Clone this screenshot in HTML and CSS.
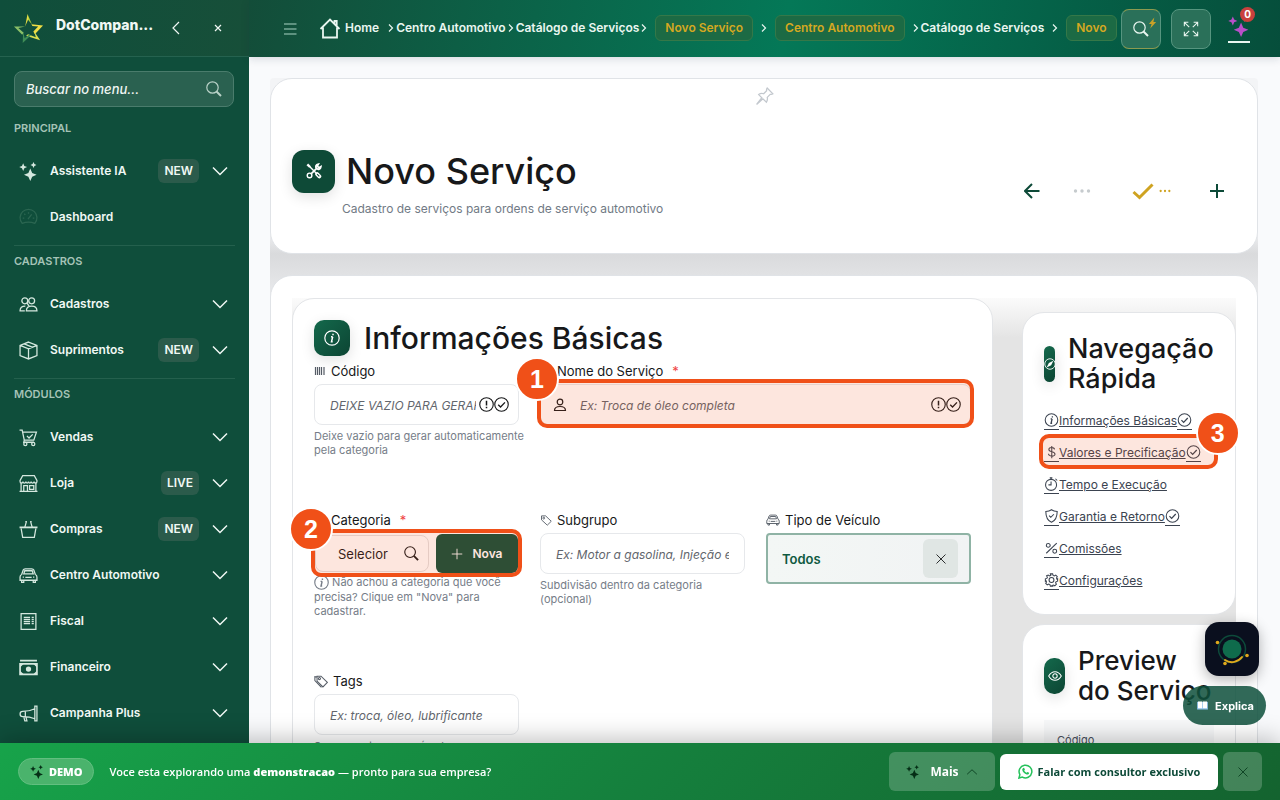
FILE: index.html
```html
<!DOCTYPE html>
<html lang="pt-BR">
<head>
<meta charset="utf-8">
<title>Novo Serviço</title>
<link rel="stylesheet" href="styles.css">
</head>
<body>
<svg class="sprite" aria-hidden="true">
  <symbol id="chev-down" viewBox="0 0 16 16"><path d="M1 4.5l7 7 7-7"/></symbol>
  <symbol id="chev-up" viewBox="0 0 16 16"><path d="M1.500 11L8 5l6.500 6"/></symbol>
  <symbol id="chev-left" viewBox="0 0 16 16"><path d="M11 2L5 8l6 6"/></symbol>
  <symbol id="chev-right" viewBox="0 0 8 12"><path d="M2 2.500L5.500 6 2 9.500"/></symbol>
  <symbol id="close" viewBox="0 0 16 16"><path d="M2 2l12 12M14 2L2 14"/></symbol>
  <symbol id="plus" viewBox="0 0 16 16"><path d="M8 1v14M1 8h14"/></symbol>
  <symbol id="search" viewBox="0 0 16 16"><circle cx="6.500" cy="6.500" r="5.700"/><path d="M10.500 10.500l4.500 4.500" stroke-width="2"/></symbol>
  <symbol id="sparkle" viewBox="0 0 16 16"><path class="solid" d="M9.500 5.500l1.600 3.700 3.700 1.600-3.700 1.600-1.600 3.600-1.600-3.600-3.700-1.600 3.700-1.600zM3.500 1l1 2.300 2.300 1-2.300 1-1 2.300-1-2.300-2.300-1 2.300-1zM12.200 0l.8 1.700 1.700.8-1.700.8-.8 1.700-.8-1.700-1.700-.8 1.700-.8z"/></symbol>
  <symbol id="gauge" viewBox="0 0 18 18"><path d="M3 14.500a8 8 0 1 1 12 0c-4-1.500-8-1.500-12 0zM8.500 10.500L12 6M9 4v1.500M3.500 9.500H5M13 9.500h1.500M5 5.500l1 1"/></symbol>
  <symbol id="people" viewBox="0 0 18 18"><circle cx="5.500" cy="5.500" r="2.800"/><circle cx="12" cy="5.500" r="2.800"/><path d="M7 15h10c0-3-2-4.500-5-4.500S7 12 7 15zM5.500 15H1c0-3 1.500-4.500 5-4.500M7.500 7.500l2 3"/></symbol>
  <symbol id="box" viewBox="0 0 18 18"><path d="M9 1l8 3.200v9.600L9 17l-8-3.200V4.200zM1 4.200l8 3.300 8-3.300M9 7.500V17M5 2.800l8 3.200"/></symbol>
  <symbol id="cart" viewBox="0 0 18 18"><path d="M.5 2H3l2 9.500h9L16.500 4H3.500M5 11.500l-.5 2h9.500M7.500 7.500l2 2 3.500-3.500"/><circle cx="6" cy="15.200" r="1.500"/><circle cx="13.500" cy="15.200" r="1.500"/></symbol>
  <symbol id="shop" viewBox="0 0 18 18"><path d="M3.500 1.500h11L17 6v1c0 2-2.500 2-2.700.2C14 9 11.500 9 11.500 7.200 11.500 9 9 9 9 7.200 9 9 6.500 9 6.500 7.200 6.500 9 4 9 3.700 7.200 3.500 9 1 9 1 7V6zM2 9v7.500M16 9v7.500M.5 16.500h17M4.500 16.500V11H8v5.500M10 11h4v3.500h-4z"/></symbol>
  <symbol id="basket" viewBox="0 0 18 18"><path stroke-width="1.700" d="M.5 7h17"/><path d="M2 8l1.500 8.500h11L16 8M5.500 7L7 1.500M12.500 7L11 1.500M6 1.500h1.500M10.500 1.500H12"/></symbol>
  <symbol id="car" viewBox="0 0 18 18"><path d="M2.500 8L4 3.800C4.300 3 5 2.800 6 2.700h6c1 0 1.700.3 2 1.100L15.500 8c1 .5 1.500 1.200 1.500 2.500v3H1v-3C1 9.200 1.500 8.500 2.500 8zM4.500 7.500l1-3h7l1 3zM2.500 13.500V15.500h2v-2M13.500 13.500v2h2v-2M6 10.800h6M3.500 10.500h1.200M13.300 10.500h1.200"/></symbol>
  <symbol id="receipt" viewBox="0 0 18 18"><path d="M2 1.500h14v15H2z"/><path d="M4.500 5h6M4.500 7h6M4.500 9h6M4.500 11h6M12 5h2M12 7h2M12 9h2M12 11h2"/></symbol>
  <symbol id="cash" viewBox="0 0 18 18"><path stroke-width="1.600" d="M1 5.500h16v10H1zM1 2.500h16"/><circle class="solid" cx="9" cy="10.500" r="2.500"/><path class="solid" d="M1 5.500h3.500L1 9zM17 5.500h-3.500L17 9zM1 15.500h3.500L1 12zM17 15.500h-3.500L17 12z"/></symbol>
  <symbol id="horn" viewBox="0 0 18 18"><path d="M15 2h2v14h-2zM15 4.500C11 6.500 7 7 3.500 7 .2 7 .2 12 3.500 12c4 0 8 .5 11.500 2M6 7v5M4.500 12l1 4h2l-1-3.800"/></symbol>
  <symbol id="home" viewBox="0 0 22 22"><path d="M1.500 12L11 2.500l9.500 9.500M4 10.500V20.500h14V10.500M15.500 6.500V4h2.200V9"/></symbol>
  <symbol id="menu" viewBox="0 0 14 14"><path d="M1 2h12.500M1 7h12.500M1 12h12.500"/></symbol>
  <symbol id="expand" viewBox="0 0 18 18"><path d="M1.500 6V1.500H6M1.500 1.500L7 7M12 1.500h4.500V6M16.500 1.500L11 7M1.500 12v4.500H6M1.500 16.500L7 11M12 16.500h4.500V12M16.500 16.500L11 11"/></symbol>
  <symbol id="pin" viewBox="0 0 18 18"><path d="M11.500 1l5.500 5.500c-1 .8-2 .6-2.600.5l-2.800 2.800c.5 1.700 0 3.200-.8 4.700L7.500 11.200 1.500 16.500 6.500 10.200 3.500 7.200c1.500-1.200 3-1.300 4.700-.8L11 3.600c-.2-1 0-1.900.5-2.600z"/></symbol>
  <symbol id="tools" viewBox="0 0 18 18"><path stroke-width="2.600" d="M1.500 1.500l3 3"/><path stroke-width="1.600" d="M3.500 3.500l8 8"/><path stroke-width="4.400" stroke-linecap="round" d="M12.500 12.500l2.500 2.500"/><path stroke="#0e4a37" stroke-width="1.200" d="M12.500 12.500l2.500 2.500"/><circle stroke-width="1.600" cx="4" cy="14" r="2.600"/><path stroke-width="2" d="M6 12l6-6"/><path stroke-width="1.900" d="M14 1.200c-3 .3-4 3.300-2 4.800 1.500 2 4.500 1 4.800-2l-2.300 1.300-1.800-1.800z"/></symbol>
  <symbol id="info" viewBox="0 0 16 16"><circle cx="8" cy="8" r="7.200"/><path stroke-width="1.500" d="M8.700 6.700l-1.200 5h1.200M7 6.800h1.700M9 3.800v1.400"/></symbol>
  <symbol id="alert" viewBox="0 0 16 16"><circle cx="8" cy="8" r="7.200"/><path stroke-width="1.600" d="M8 4v5M8 10.500v1.600"/></symbol>
  <symbol id="check-circle" viewBox="0 0 16 16"><circle cx="8" cy="8" r="7.200"/><path stroke-width="1.400" d="M4.500 8.200l2.500 2.500 4.700-5"/></symbol>
  <symbol id="barcode" viewBox="0 0 12 10"><path d="M1.500 1v8M3.500 1v8M5.500 1v8M7.500 1v8M10 1v8"/></symbol>
  <symbol id="user" viewBox="0 0 14 14"><circle cx="7" cy="4" r="2.800"/><path d="M1.500 12.500h11c0-2.500-1.500-4-5.500-4s-5.500 1.500-5.500 4z"/></symbol>
  <symbol id="tag" viewBox="0 0 16 16"><path d="M2 2.500h5.500l7.500 7.200-5.300 5.200L2 7.800z"/><circle cx="5" cy="5.500" r="1.200"/></symbol>
  <symbol id="tags" viewBox="0 0 16 16"><path d="M3.500 2.500H8l7.300 7.200-5.100 5.100L3.500 8zM3.500 3.500L1 3v4.500l7.500 7.700"/><circle cx="6.200" cy="5.200" r="1.200"/></symbol>
  <symbol id="compass" viewBox="0 0 16 16"><circle cx="8" cy="8" r="7"/><path class="solid" d="M12.500 3.500L9.500 9.500l-6 3 3-6z"/></symbol>
  <symbol id="eye" viewBox="0 0 16 16"><path d="M.8 8C4.500 1.500 11.500 1.500 15.200 8 11.500 14.500 4.500 14.500.8 8z"/><circle cx="8" cy="8" r="2.500"/></symbol>
  <symbol id="dollar" viewBox="0 0 16 16"><path d="M11.500 5C11 2 5 2 5 5c0 3.500 7 2 7 5.500 0 3-7 3-7.500-.5M8.300 1v14"/></symbol>
  <symbol id="timer" viewBox="0 0 16 16"><circle cx="7.500" cy="9" r="6.300"/><path d="M7.500 5v4h-3M6 1h3M12.500 2l2 2M7.500 1v1.700"/></symbol>
  <symbol id="shield" viewBox="0 0 16 16"><path d="M8 .8C6 2.200 4 2.700 1.500 2.800c0 6 1 10 6.500 12.400 5.500-2.400 6.500-6.400 6.500-12.400C12 2.700 10 2.200 8 .8zM5.200 7.500l2 2 3.500-3.500"/></symbol>
  <symbol id="percent" viewBox="0 0 16 16"><path d="M14 2.500L2 14"/><circle cx="4.300" cy="5" r="2.200"/><circle cx="11.700" cy="11.700" r="2.200"/></symbol>
  <symbol id="gear" viewBox="0 0 16 16"><circle cx="8" cy="8" r="2.800"/><path d="M6.700 1h2.600l.5 1.700 1.400.6 1.600-.9 1.800 1.800-.9 1.600.6 1.400L15 6.700v2.600l-1.700.5-.6 1.400.9 1.600-1.800 1.800-1.600-.9-1.400.6L9.300 15H6.700l-.5-1.700-1.400-.6-1.600.9-1.800-1.800.9-1.600-.6-1.400L1 9.300V6.700l1.700-.5.6-1.400-.9-1.600L4.200 2.400l1.600.9 1.400-.6z"/></symbol>
  <symbol id="arrow-left" viewBox="0 0 16 16"><path d="M8 1L1 8l7 7M1 8h14.500"/></symbol>
  <symbol id="dots" viewBox="0 0 18 6"><circle class="solid" cx="2.500" cy="3" r="1.700"/><circle class="solid" cx="9" cy="3" r="1.700"/><circle class="solid" cx="15.500" cy="3" r="1.700"/></symbol>
  <symbol id="check" viewBox="0 0 22 16"><path d="M1.500 9l6 5.500L20.500 1.500"/></symbol>
  <symbol id="whatsapp" viewBox="0 0 16 16"><path d="M1 15l1-3.700a6.800 6.800 0 1 1 2.700 2.700z"/><path class="solid" d="M5.500 4.200l1-.2.9 2-.8 1c.6 1.100 1.300 1.800 2.500 2.400l.9-1 1.900.9c.1 1.500-1.500 2.200-2.600 1.800-2.500-.8-4-2.300-4.700-4.500-.2-.9.200-1.900.9-2.400z"/></symbol>
</svg>

<div class="app">
  <aside class="sidebar">
    <div class="brand">
      <svg class="logo" viewBox="0 0 32 32"><path fill="#a8cf3c" d="M15 1l4.500 10.500L15.500 7z"/><path fill="#e7dc45" d="M15 1l1 5-3.500 8z"/><path fill="#8abf68" d="M1 14l11.500 0-7 1.500 5.500 5-1.500 2z"/><path fill="#f0de45" d="M31 13l-12-1.500 1 2 6 .5-5 5 1.500 3z"/><path fill="#dce04e" d="M28 28l-6-9 1.500 6-8-3-2 1.500z"/><path fill="#3f8d57" d="M10 31l.5-12 1.500 7 5-4 1.500 1z"/></svg>
      <strong class="brand-name">DotCompan...</strong>
      <button class="bare" aria-label="Recolher"><svg class="i16"><use href="#chev-left"/></svg></button>
      <button class="bare" aria-label="Fechar menu"><svg class="i8 thick"><use href="#close"/></svg></button>
    </div>
    <label class="menu-search"><input type="text" placeholder="Buscar no menu..." aria-label="Buscar no menu"><svg class="i16"><use href="#search"/></svg></label>
    <nav>
      <section>
        <h2>Principal</h2>
        <a href="#"><svg class="i18"><use href="#sparkle"/></svg><span>Assistente IA</span><em>NEW</em><svg class="i16 chev"><use href="#chev-down"/></svg></a>
        <a href="#"><svg class="i18 dim"><use href="#gauge"/></svg><span>Dashboard</span></a>
      </section>
      <section>
        <h2>Cadastros</h2>
        <a href="#"><svg class="i18"><use href="#people"/></svg><span>Cadastros</span><svg class="i16 chev"><use href="#chev-down"/></svg></a>
        <a href="#"><svg class="i18"><use href="#box"/></svg><span>Suprimentos</span><em>NEW</em><svg class="i16 chev"><use href="#chev-down"/></svg></a>
      </section>
      <section>
        <h2>Módulos</h2>
        <a href="#"><svg class="i18"><use href="#cart"/></svg><span>Vendas</span><svg class="i16 chev"><use href="#chev-down"/></svg></a>
        <a href="#"><svg class="i18"><use href="#shop"/></svg><span>Loja</span><em>LIVE</em><svg class="i16 chev"><use href="#chev-down"/></svg></a>
        <a href="#"><svg class="i18"><use href="#basket"/></svg><span>Compras</span><em>NEW</em><svg class="i16 chev"><use href="#chev-down"/></svg></a>
        <a href="#"><svg class="i18"><use href="#car"/></svg><span>Centro Automotivo</span><svg class="i16 chev"><use href="#chev-down"/></svg></a>
        <a href="#"><svg class="i18"><use href="#receipt"/></svg><span>Fiscal</span><svg class="i16 chev"><use href="#chev-down"/></svg></a>
        <a href="#"><svg class="i18"><use href="#cash"/></svg><span>Financeiro</span><svg class="i16 chev"><use href="#chev-down"/></svg></a>
        <a href="#"><svg class="i18"><use href="#horn"/></svg><span>Campanha Plus</span><svg class="i16 chev"><use href="#chev-down"/></svg></a>
      </section>
    </nav>
  </aside>

  <div class="main">
    <header class="topbar">
      <button class="bare burger" aria-label="Menu"><svg class="i14"><use href="#menu"/></svg></button>
      <nav class="crumbs">
        <a class="home" href="#"><svg class="i22"><use href="#home"/></svg>Home</a>
        <svg class="sep"><use href="#chev-right"/></svg>
        <a href="#">Centro Automotivo</a>
        <svg class="sep"><use href="#chev-right"/></svg>
        <a href="#">Catálogo de Serviços</a>
        <svg class="sep"><use href="#chev-right"/></svg>
        <span class="pill">Novo Serviço</span>
        <svg class="sep"><use href="#chev-right"/></svg>
        <span class="pill">Centro Automotivo</span>
        <svg class="sep"><use href="#chev-right"/></svg>
        <a class="spaced" href="#">Catálogo de Serviços</a>
        <svg class="sep"><use href="#chev-right"/></svg>
        <span class="pill">Novo</span>
      </nav>
      <div class="tools">
        <button class="tool gold" aria-label="Buscar"><svg class="i16"><use href="#search"/></svg><svg class="bolt" viewBox="0 0 10 12"><path d="M7 0L1 7h3L2.500 12 9 5H6z" fill="#c9a227"/></svg></button>
        <button class="tool" aria-label="Tela cheia"><svg class="i16"><use href="#expand"/></svg></button>
        <button class="ai" aria-label="Assistente"><svg class="i22"><use href="#sparkle"/></svg><b>0</b></button>
      </div>
    </header>

    <main class="page">
      <div class="canvas">
        <section class="hero">
          <svg class="i18 pin"><use href="#pin"/></svg>
          <div class="hero-row">
            <div class="hero-text">
              <div class="title-row"><span class="tile big"><svg class="i16"><use href="#tools"/></svg></span><h1>Novo Serviço</h1></div>
              <p>Cadastro de serviços para ordens de serviço automotivo</p>
            </div>
            <div class="actions">
              <button class="bare" aria-label="Voltar"><svg class="i16 bold"><use href="#arrow-left"/></svg></button>
              <button class="bare more" aria-label="Mais opções"><svg class="dots"><use href="#dots"/></svg></button>
              <button class="bare save" aria-label="Salvar"><svg class="i22 bolder"><use href="#check"/></svg><svg class="dots small"><use href="#dots"/></svg></button>
              <button class="bare" aria-label="Adicionar"><svg class="i16 bold"><use href="#plus"/></svg></button>
            </div>
          </div>
        </section>

        <section class="body-card">
          <div class="columns">
            <form class="form-card">
              <div class="card-head"><span class="tile"><svg class="i16"><use href="#info"/></svg></span><h2>Informações Básicas</h2></div>
              <div class="fields">
                <div class="field">
                  <label for="codigo"><svg class="i12"><use href="#barcode"/></svg>Código</label>
                  <div class="control"><input id="codigo" class="with-status" type="text" placeholder="DEIXE VAZIO PARA GERAR"><span class="status"><svg class="i15"><use href="#alert"/></svg><svg class="i15"><use href="#check-circle"/></svg></span></div>
                  <p>Deixe vazio para gerar automaticamente pela categoria</p>
                </div>
                <div class="field wide">
                  <label for="nome"><svg class="i12"><use href="#tag"/></svg>Nome do Serviço <i>*</i></label>
                  <div class="control"><svg class="lead i14"><use href="#user"/></svg><input id="nome" class="with-status with-lead" type="text" placeholder="Ex: Troca de óleo completa"><span class="status"><svg class="i15"><use href="#alert"/></svg><svg class="i15"><use href="#check-circle"/></svg></span><span class="mark"><b>1</b></span></div>
                </div>
                <div class="field">
                  <label for="categoria"><svg class="i12"><use href="#tag"/></svg>Categoria <i>*</i></label>
                  <div class="control pick"><button type="button" id="categoria" class="select-btn">Selecior<svg class="i15"><use href="#search"/></svg></button><button type="button" class="new-btn"><svg class="i12"><use href="#plus"/></svg>Nova</button><span class="mark"><b>2</b></span></div>
                  <p><svg class="i15"><use href="#info"/></svg> Não achou a categoria que você precisa? Clique em "Nova" para cadastrar.</p>
                </div>
                <div class="field">
                  <label for="sub"><svg class="i12"><use href="#tag"/></svg>Subgrupo</label>
                  <div class="control"><input id="sub" type="text" placeholder="Ex: Motor a gasolina, Injeção eletrônica"></div>
                  <p>Subdivisão dentro da categoria (opcional)</p>
                </div>
                <div class="field">
                  <label for="tipo"><svg class="i14"><use href="#car"/></svg>Tipo de Veículo</label>
                  <div class="control chosen"><select id="tipo"><option>Todos</option></select><button type="button" aria-label="Limpar"><svg class="i12"><use href="#close"/></svg></button></div>
                </div>
                <div class="field">
                  <label for="tags-input"><svg class="i14"><use href="#tags"/></svg>Tags</label>
                  <div class="control"><input id="tags-input" type="text" placeholder="Ex: troca, óleo, lubrificante"></div>
                  <p>Separe as tags por vírgula</p>
                </div>
              </div>
            </form>

            <div class="side">
              <section class="side-card">
                <div class="card-head"><span class="tile slim"><svg class="i12"><use href="#compass"/></svg></span><h2>Navegação Rápida</h2></div>
                <nav class="quick">
                  <a href="#"><svg><use href="#info"/></svg><span>Informações Básicas</span><svg><use href="#check-circle"/></svg></a>
                  <a href="#"><svg><use href="#dollar"/></svg><span>Valores e Precificação</span><svg><use href="#check-circle"/></svg><span class="mark end"><b>3</b></span></a>
                  <a href="#"><svg><use href="#timer"/></svg><span>Tempo e Execução</span></a>
                  <a href="#"><svg><use href="#shield"/></svg><span>Garantia e Retorno</span><svg><use href="#check-circle"/></svg></a>
                  <a href="#"><svg><use href="#percent"/></svg><span>Comissões</span></a>
                  <a href="#"><svg><use href="#gear"/></svg><span>Configurações</span></a>
                </nav>
              </section>
              <section class="side-card preview">
                <div class="card-head"><span class="tile mid"><svg class="i14"><use href="#eye"/></svg></span><h2>Preview<br>do Serviço</h2></div>
                <div class="preview-box">Código</div>
              </section>
            </div>
          </div>
        </section>
      </div>
    </main>
  </div>
</div>

<div class="floaters">
  <button class="orb" aria-label="Assistente"><svg viewBox="0 0 54 54"><circle cx="27" cy="27" r="13.500" fill="none" stroke="#0d4a3a" stroke-width="1.500"/><circle cx="27" cy="27" r="9.500" fill="#0f6b4c"/><path d="M20 38c6 4 13 2 17-3" fill="none" stroke="#e0a91c" stroke-width="2" stroke-linecap="round"/><circle cx="12.500" cy="20.500" r="1.800" fill="#e0a91c"/><circle cx="42" cy="33.500" r="1.800" fill="#e0a91c"/><circle cx="20" cy="41.500" r="1.800" fill="#e0a91c"/></svg></button>
  <button class="explain"><svg viewBox="0 0 12 10"><path fill="#8fc1ea" d="M0 1h12v8.500H0z"/><path fill="#fff" d="M1 .5h4.600V8H1zM6.400.5H11V8H6.400z"/></svg>Explica</button>
</div>

<footer class="demo">
  <span class="demo-tag"><svg class="i14"><use href="#sparkle"/></svg>DEMO</span>
  <p>Voce esta explorando uma <b>demonstracao</b> — pronto para sua empresa?</p>
  <button class="demo-more"><svg class="i14"><use href="#sparkle"/></svg>Mais<svg class="i12"><use href="#chev-up"/></svg></button>
  <button class="demo-talk"><svg class="i15"><use href="#whatsapp"/></svg>Falar com consultor exclusivo</button>
  <button class="demo-close" aria-label="Fechar"><svg class="i12"><use href="#close"/></svg></button>
</footer>
</body>
</html>
```
FILE: styles.css
```css
* { box-sizing: border-box; }
html, body { height: 100%; }
body { margin: 0; overflow: hidden; background: #f9fafc; color: #17181a; font: 13px/16px Inter, sans-serif; }
h1, h2, p { margin: 0; font-weight: 500; }
a { color: inherit; text-decoration: none; }
button, input, select { font: inherit; color: inherit; border: 0; background: none; padding: 0; margin: 0; min-width: 0; }
svg { fill: none; stroke: currentColor; stroke-width: 1.2; flex: none; overflow: visible; }
.solid { fill: currentColor; stroke: none; }
.sprite { position: absolute; width: 0; height: 0; }
.i8 { width: 8px; height: 8px; }
.i12 { width: 12px; height: 12px; }
.i14 { width: 14px; height: 14px; }
.i15 { width: 15px; height: 15px; }
.i16 { width: 16px; height: 16px; }
.i18 { width: 19px; height: 19px; }
.i22 { width: 22px; height: 22px; }
.bold { stroke-width: 2; }
.bolder { stroke-width: 3; }
.thick { stroke-width: 2.4; }
.bare { display: flex; align-items: center; justify-content: center; }

.app { display: flex; height: 100%; }

/* Sidebar */
.sidebar { width: 249px; flex: none; background: #0f4e3b; color: #f0f8f4; }
.brand { display: flex; align-items: center; height: 57px; padding: 0 24px 0 13px; border-bottom: 1px solid #25624f; background: linear-gradient(90deg, #0f4e3b, #174f39); }
.logo { width: 31px; height: 31px; margin-right: 12px; stroke: none; }
.brand-name { flex: 1; font-size: 14px; font-weight: 800; padding-bottom: 7px; }
.brand .bare { width: 14px; margin-left: 14px; }
.brand .bare + .bare { margin-left: 28px; }
.menu-search { display: flex; align-items: center; margin: 14px 15px 13px 14px; height: 36px; padding: 0 11px; border: 1px solid #4a7c6c; border-radius: 8px; background: #2a6150; color: #b9d2c8; }
.menu-search input { flex: 1; outline: 0; }
.menu-search input::placeholder { color: #f0f6f3; font-style: italic; font-weight: 500; opacity: 1; }
.sidebar section { margin: 0 14px; }
.sidebar section + section { margin-top: 5px; padding-top: 7px; border-top: 1px solid #24604d; }
.sidebar h2 { margin-bottom: 12px; font-size: 11px; line-height: 16px; font-weight: 600; text-transform: uppercase; color: #a5c3b7; }
.sidebar section a { display: flex; align-items: center; height: 46px; padding: 0 7px 0 5px; font-size: 12px; font-weight: 600; }
.sidebar section a svg:first-child { margin-right: 12px; color: #d5e8df; }
.sidebar section a svg.dim:first-child { color: #2b6651; }
.sidebar section a span { flex: 1; }
.sidebar em { padding: 4px 6px; border-radius: 6px; background: #2b5b4b; font-style: normal; margin-right: 13px; }
.chev { stroke-width: 1.5; }

/* Top bar */
.main { flex: 1; min-width: 0; display: flex; flex-direction: column; }
.topbar { position: relative; z-index: 2; display: flex; align-items: center; flex: none; height: 57px; padding: 0 30px 0 34px; color: #e9f6f0; background: linear-gradient(100deg, #134d39, #047857 52%, #064e3b); box-shadow: 0 2px 8px rgba(20, 40, 60, 0.15); }
.burger { color: #a9d3c3; margin-right: 22px; }
.crumbs { flex: 1; display: flex; align-items: center; overflow: hidden; padding-bottom: 2px; font-size: 12px; font-weight: 600; white-space: nowrap; }
.home { display: flex; align-items: center; gap: 4px; }
.home svg { stroke-width: 1.8; }
.sep { width: 10px; height: 12px; }
.home + .sep { margin-left: 7px; }
.pill { padding: 4px 9px; margin: 0 6px; border: 1px solid #357848; border-radius: 6px; background: #1c6a44; color: #d4a821; }
.pill:last-child { margin-right: 0; }
.spaced { margin-right: 6px; }
.tools { display: flex; align-items: center; gap: 10px; }
.tool { position: relative; display: flex; align-items: center; justify-content: center; width: 40px; height: 40px; border: 1px solid #56957f; border-radius: 8px; background: #2a7059; }
.gold { border-top-color: #8c9a50; border-bottom-color: #8c9a50; }
.bolt { position: absolute; right: 3px; top: 7px; width: 9px; height: 12px; stroke: none; }
.ai { position: relative; width: 22px; height: 29px; margin-left: 7px; border-bottom: 2px solid #e9f6f0; color: #b94fc9; }
.ai b { position: absolute; right: -5px; top: -7px; width: 15px; height: 15px; border-radius: 50%; background: #c9403d; color: #fff; font-size: 10px; line-height: 15px; }

/* Page */
.page { flex: 1; min-height: 0; overflow: hidden; padding: 21px 22px 0 21px; }
.canvas { overflow: hidden; border-radius: 4px; background: linear-gradient(#f3f4f6 0, #f3f4f6 150px, #d9dadc 176px, #e6e7e9 210px); }
.hero { height: 176px; padding: 8px 21px; border: 1px solid #e0e3e7; border-radius: 22px; background: #fff; }
.pin { display: block; margin: 0 auto; color: #c3c8ce; }
.hero-row { display: flex; justify-content: space-between; align-items: center; margin-top: 43px; }
.title-row { display: flex; align-items: center; gap: 11px; height: 44px; }
h1 { font-size: 36px; line-height: 44px; }
.hero p { margin: 8px 0 0 50px; color: #717a85; font-size: 12px; line-height: 16px; font-weight: 400; }
.tile { display: flex; align-items: center; justify-content: center; flex: none; width: 36px; height: 36px; border-radius: 10px; color: #fff; background: linear-gradient(135deg, #14694c, #0c4533); box-shadow: 0 4px 14px rgba(0, 0, 0, 0.12); overflow: hidden; }
.big { width: 43px; height: 43px; border-radius: 12px; background: #0e4a37; }
.slim { width: 11px; border-radius: 6px; }
.mid { width: 21px; }
.actions { display: flex; align-items: center; gap: 33px; color: #0d4a38; margin: 15px 11px 0 0; }
.dots { width: 18px; height: 6px; }
.small { width: 12px; height: 4px; margin-left: 5px; }
.more { color: #c6cbce; }
.save { color: #cfa321; margin-left: 8px; margin-right: 5px; }

.body-card { margin-top: 21px; padding: 22px 21px; border: 1px solid #e0e3e7; border-radius: 22px 22px 0 0; background: #fff; }
.columns { display: grid; grid-template-columns: minmax(0, 1fr) 214px; gap: 29px; align-items: start; background: linear-gradient(#fbfbfb, #e4e4e4 40px); }
.form-card { min-height: 520px; padding: 20px 21px; border: 1px solid #e3e5e8; border-radius: 22px; background: #fff; }
.card-head { display: flex; align-items: center; gap: 14px; }
.card-head h2 { font-size: 30px; line-height: 38px; font-weight: 500; }
.fields { display: grid; grid-template-columns: repeat(3, minmax(0, 1fr)); column-gap: 21px; row-gap: 55px; margin-top: 6px; }
.wide { grid-column: span 2; }
.field label { display: flex; align-items: center; gap: 5px; height: 16px; margin-bottom: 5px; }
.field label svg { color: #555c66; }
.field label i { color: #ef4444; font-style: normal; margin-left: 4px; }
.field p { margin: 4px -8px 0 0; font-size: 11px; line-height: 14px; font-weight: 400; color: #767d88; }
.field p svg { vertical-align: -4px; }
.field .pick + p { margin-top: 1px; }
.control { position: relative; display: flex; align-items: center; height: 41px; border: 1px solid #e6e8eb; border-radius: 8px; }
.control input { width: 100%; height: 100%; padding: 0 15px; outline: 0; }
.control input::placeholder { color: #62666d; font-size: 12px; font-style: italic; opacity: 1; }
.control input.with-status { padding-right: 42px; }
.control input.with-lead { padding-left: 39px; }
.status { position: absolute; right: 9px; display: flex; }
.lead { position: absolute; left: 12px; }
.mark { position: absolute; inset: -6px -4px -4px; border: 4px solid #f05018; border-radius: 10px; background: rgba(240, 80, 24, 0.14); pointer-events: none; }
.mark b { position: absolute; left: -26px; top: -26px; width: 44px; height: 44px; border: 2px solid #fff; border-radius: 50%; background: #f05018; color: #fff; font: bold 25px/40px "Liberation Sans", sans-serif; text-align: center; }
.pick { border-color: transparent; gap: 7px; }
.pick .mark { inset: -5px -4px -4px; }
.select-btn { display: flex; align-items: center; justify-content: space-between; flex: 1; height: 37px; padding: 0 9px 0 22px; border: 1px solid #e3e0e0; border-radius: 8px; }
.new-btn { display: flex; align-items: center; justify-content: center; gap: 9px; width: 82px; height: 39px; border-radius: 6px; background: #0f4e3b; color: #fff; font-size: 12px; font-weight: 600; }
.chosen { height: 51px; padding: 0 11px 0 14px; border: 2px solid #8fb3a5; border-radius: 4px; background: linear-gradient(90deg, #f3f7f5, #f1f3f4); }
.chosen select { flex: 1; appearance: none; color: #0f5a41; font-weight: 600; outline: 0; }
.chosen button { display: flex; align-items: center; justify-content: center; width: 35px; height: 39px; border-radius: 6px; background: #e0e6e4; }

/* Side column */
.side { display: grid; gap: 9px; padding-top: 14px; }
.side-card { padding: 21px 21px 17px; border: 1px solid #e3e5e8; border-radius: 22px; background: #fff; min-width: 0; }
.side .card-head { gap: 13px; }
.side h2 { font-size: 27px; line-height: 30px; }
.preview h2 { font-size: 26px; white-space: nowrap; }
.quick { margin-top: 11px; display: grid; color: #3b4350; font-size: 12px; }
.quick a { position: relative; display: flex; align-items: center; height: 32px; white-space: nowrap; width: max-content; }
.quick span:not(.mark) { text-decoration: underline; }
.quick svg { width: 15px; height: 18px; padding: 1px 0 2px; border-bottom: 1px solid currentColor; }
.quick .mark { inset: -3px -17px 0 -5px; }
.quick .end b { left: auto; right: -26px; top: -27px; }
.preview-box { margin-top: 14px; padding: 13px; min-height: 120px; background: #f8f9fa; font-size: 11px; line-height: 14px; color: #4a5260; }

/* Floating buttons */
.floaters { position: fixed; right: 14px; bottom: 75px; display: grid; gap: 10px; justify-items: end; }
.orb { width: 54px; height: 54px; margin-right: 7px; border-radius: 14px; background: #0a0f1e; box-shadow: 0 4px 14px rgba(0, 0, 0, 0.3); }
.orb svg { display: block; stroke: none; }
.explain { display: flex; align-items: center; gap: 7px; height: 39px; padding: 0 12px 0 14px; border-radius: 20px; background: rgba(15, 80, 60, 0.86); color: #fff; font-size: 11px; font-weight: 700; }
.explain svg { width: 11px; height: 9px; stroke: none; }

/* Demo bar */
.demo { position: fixed; left: 0; right: 0; bottom: 0; z-index: 3; display: flex; align-items: center; height: 57px; padding: 0 18px; background: linear-gradient(135deg, #17a34a, #15803d 50%, #14632f); color: #fff; font: 700 11px/16px "Open Sans", sans-serif; box-shadow: 0 -4px 24px rgba(0, 0, 0, 0.25); }
.demo p { flex: 1; font-weight: 600; margin-left: 16px; }
.demo .i14 { color: #052e16; }
.demo-tag { display: flex; align-items: center; gap: 5px; height: 27px; padding: 0 10px 0 11px; border: 1px solid #62bf80; border-radius: 14px; background: #4ab36c; font-weight: 800; }
.demo button { display: flex; align-items: center; justify-content: center; height: 39px; border-radius: 6px; background: rgba(255, 255, 255, 0.2); }
.demo .demo-more { width: 106px; gap: 7px; font-size: 12px; }
.demo .demo-more .i14 { margin-right: 3px; }
.demo .demo-more .i12 { color: #0a4020; }
.demo .demo-talk { width: 218px; height: 36px; gap: 5px; margin: 0 5px; background: #fff; color: #0d4a38; }
.demo-talk svg { color: #25c15b; stroke-width: 1.6; }
.demo .demo-close { width: 39px; color: #0a4020; }
```
